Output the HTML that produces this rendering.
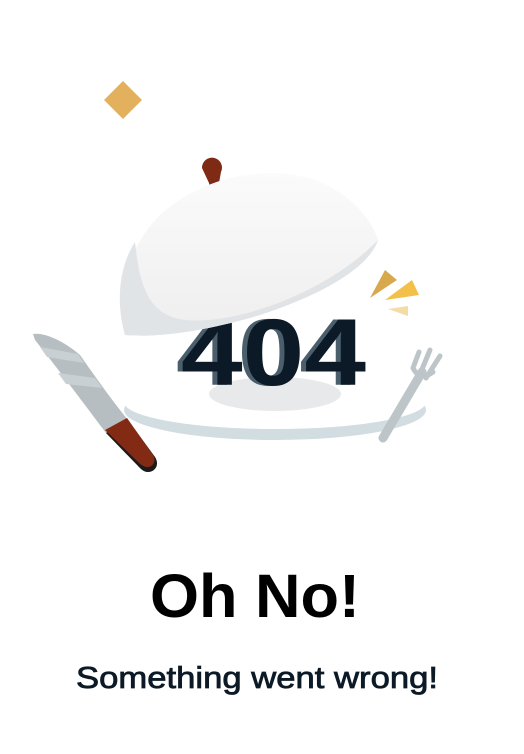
<!DOCTYPE html>
<html><head><meta charset="utf-8"><style>
html,body{margin:0;padding:0;background:#fff;width:524px;height:754px;overflow:hidden}
</style></head><body>
<svg width="524" height="754" viewBox="0 0 524 754" xmlns="http://www.w3.org/2000/svg">
<defs>
<linearGradient id="dome" x1="0" y1="0" x2="0" y2="1">
<stop offset="0" stop-color="#fbfbfb"/><stop offset="1" stop-color="#efeeef"/>
</linearGradient>
</defs>
<polygon points="123,81 142,100 123,119 104,100" fill="#e3b15e"/>
<ellipse cx="275" cy="410" rx="151" ry="30" fill="#d2dde2"/>
<ellipse cx="275" cy="402" rx="151" ry="27" fill="#fff"/>
<ellipse cx="275" cy="394" rx="66" ry="17" fill="#e8e9eb"/>
<text x="176" y="385" font-family="Liberation Sans, sans-serif" font-weight="bold" font-size="95" fill="#4a5e6c" textLength="185" lengthAdjust="spacingAndGlyphs">404</text>
<text x="181" y="385" font-family="Liberation Sans, sans-serif" font-weight="bold" font-size="95" fill="#0c1a27" textLength="185" lengthAdjust="spacingAndGlyphs">404</text>
<path d="M202,168 a10,10 0 1 1 19,4 l-2,11 a5,5 0 0 1 -10,0 z" fill="#7f2a14"/>
<path d="M125,335 C115,300 125,250 160,215 C200,178 260,165 310,178 C345,190 370,215 378,240 C370,260 330,290 260,315 C210,330 160,338 125,335 Z" fill="url(#dome)"/>
<path d="M125,335 C115,300 120,265 135,242 C140,290 150,315 185,320 C240,325 330,290 378,240 C370,265 330,292 260,315 C210,330 160,338 125,335 Z" fill="#e0e4e7"/>
<polygon points="370,298 385,270 397,280" fill="#d8a94c"/>
<polygon points="385,300 412,280 419,295" fill="#f3c04a"/>
<polygon points="388,309 408,306 408,316" fill="#f5dba6"/>
<path d="M33,334 C45,332 65,342 80,355 C92,372 110,398 128,420 L106,433 C85,405 55,365 35,340 Z" fill="#b7bec2"/>
<path d="M40,347 L78,354 L84,363 L47,357 Z" fill="#c9d0d3"/>
<path d="M58,373 L95,378 L102,388 L66,384 Z" fill="#c9d0d3"/>
<path d="M106,433 L128,420 L155,457 C160,465 155,472 148,472 C143,472 140,468 138,466 Z" fill="#1b1b1b"/>
<path d="M105,430 L127,418 L153,455 C157,462 152,468 146,467 C142,466 139,463 137,461 Z" fill="#832a14"/>
<path d="M383,438 L422,372" stroke="#bec5c8" stroke-width="9" stroke-linecap="round"/>
<path d="M413,368 L419,352 M420,374 L430,350 M426,378 L440,356 M413,368 Q420,382 433,372" stroke="#bec5c8" stroke-width="5" stroke-linecap="round" fill="none"/>
<text x="150" y="617" font-family="Liberation Sans, sans-serif" font-weight="bold" font-size="61" fill="#000" textLength="210" lengthAdjust="spacingAndGlyphs">Oh No!</text>
<text x="76" y="688" font-family="Liberation Sans, sans-serif" font-size="31" fill="#0c1a27" stroke="#0c1a27" stroke-width="0.8" textLength="362" lengthAdjust="spacingAndGlyphs">Something went wrong!</text>
</svg>
</body></html>
